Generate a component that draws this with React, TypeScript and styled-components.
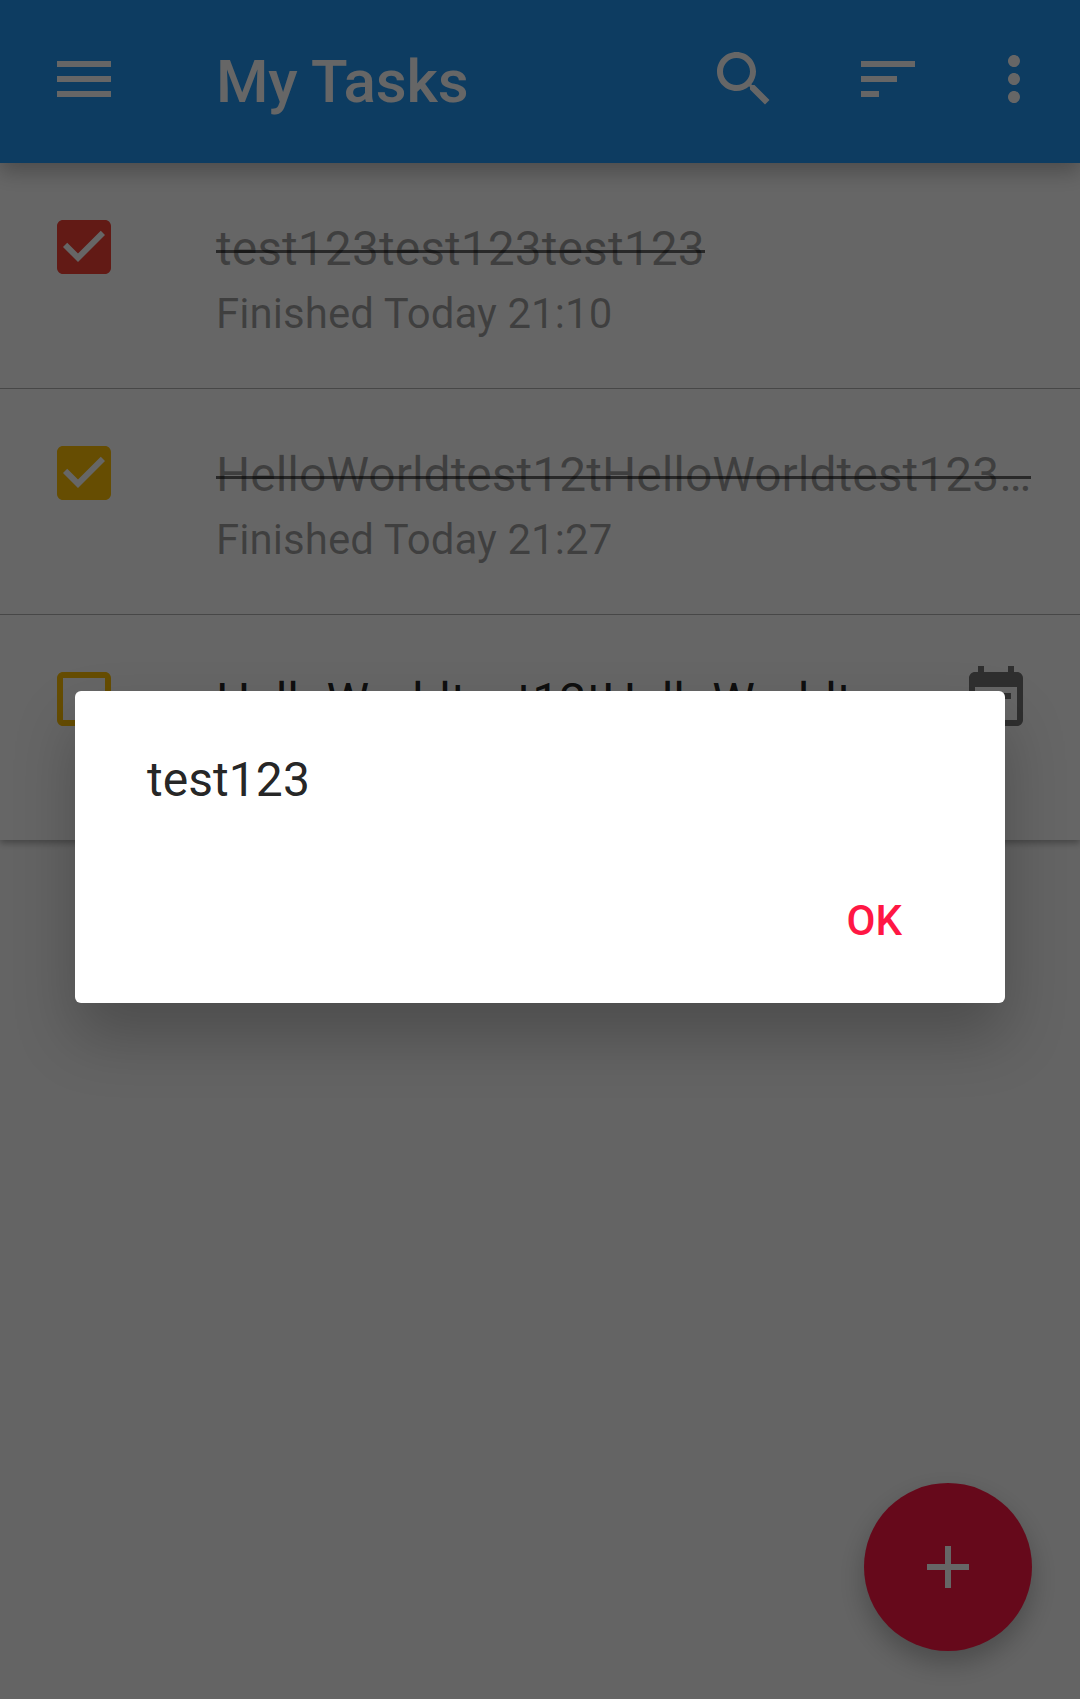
import React from 'react';
import styled, { createGlobalStyle } from 'styled-components';

const GlobalStyle = createGlobalStyle`
  * { box-sizing: border-box; }
  html, body { margin: 0; padding: 0; }
  body { font-family: Roboto, "Noto Sans", sans-serif; background: #fafafa; overflow: hidden; }
`;

const Screen = styled.div`
  position: relative;
  width: 1080px;
  height: 1699px;
  overflow: hidden;
  background: #fafafa;
`;

const Toolbar = styled.header`
  position: relative;
  z-index: 1;
  display: flex;
  align-items: center;
  height: 163px;
  padding: 0 30px 5px 48px;
  background: #2196f3;
  color: #fff;
  box-shadow: 0 9px 20px rgba(0, 0, 0, 0.26);
`;

const ToolbarTitle = styled.h1`
  flex: 1;
  margin: 5px 0 0 96px;
  font-size: 60px;
  line-height: 70px;
  font-weight: 500;
  letter-spacing: -0.12px;
`;

const Actions = styled.div`
  display: flex;
  gap: 72px;
`;

const OverflowSlot = styled.span`
  display: flex;
  margin-left: -18px;
`;

const Icon = styled.svg`
  display: block;
  flex: none;
  width: 72px;
  height: 72px;
  fill: currentColor;
`;

const TaskList = styled.ul`
  margin: 0;
  padding: 0;
  list-style: none;
  background: #fff;
  box-shadow: 0 3px 7px rgba(0, 0, 0, 0.32);
`;

const TaskRow = styled.li`
  display: flex;
  align-items: flex-start;
  height: 226px;
  padding: 48px 48px 0;
  border-bottom: 1px solid rgba(0, 0, 0, 0.3);

  &:last-child {
    height: 225px;
    border-bottom: 0;
  }
`;

const CheckBox = styled(Icon)<{ $tint: string }>`
  color: ${(p) => p.$tint};
`;

const TaskBody = styled.div`
  flex: 1;
  min-width: 0;
  padding-top: 10px;
  margin-left: 96px;
`;

const TaskTitle = styled.span<{ $done: boolean; $tracking?: number }>`
  position: relative;
  display: inline-block;
  vertical-align: top;
  font-size: 48px;
  line-height: 56px;
  letter-spacing: ${(p) => p.$tracking ?? 0}px;
  white-space: nowrap;
  color: ${(p) => (p.$done ? 'rgba(0, 0, 0, 0.38)' : 'rgba(0, 0, 0, 0.87)')};

  &::after {
    content: '';
    display: ${(p) => (p.$done ? 'block' : 'none')};
    position: absolute;
    left: 0;
    right: 0;
    top: 29px;
    height: 3px;
    background: rgba(0, 0, 0, 0.6);
  }
`;

const TaskStatus = styled.div`
  margin-top: 12px;
  font-size: 42px;
  line-height: 50px;
  letter-spacing: 0.05px;
  color: rgba(0, 0, 0, 0.38);
`;

const DueIcon = styled(Icon)`
  color: rgba(0, 0, 0, 0.54);
`;

const Fab = styled.button`
  position: absolute;
  right: 48px;
  bottom: 48px;
  display: flex;
  align-items: center;
  justify-content: center;
  width: 168px;
  height: 168px;
  padding: 0;
  border: 0;
  border-radius: 50%;
  background: #ff1744;
  color: #fff;
  box-shadow: 0 12px 27px rgba(0, 0, 0, 0.25);
`;

const Scrim = styled.div`
  position: absolute;
  inset: 0;
  z-index: 2;
  display: flex;
  justify-content: center;
  align-items: flex-start;
  padding-top: 691px;
  background: rgba(0, 0, 0, 0.6);
`;

const Dialog = styled.div`
  display: flex;
  flex-direction: column;
  justify-content: space-between;
  width: 930px;
  height: 312px;
  padding: 61px 72px 57px;
  border-radius: 6px;
  background: #fff;
  box-shadow: 0 33px 62px rgba(0, 0, 0, 0.24);
`;

const Message = styled.p`
  margin: 0;
  font-size: 48px;
  line-height: 56px;
  letter-spacing: 0.05px;
  color: rgba(0, 0, 0, 0.87);
`;

const DialogButton = styled.button`
  align-self: flex-end;
  margin-right: 31px;
  padding: 0;
  border: 0;
  background: none;
  font: 500 42px/50px Roboto, "Noto Sans", sans-serif;
  color: #ff1744;
`;

type Task = {
  title: string;
  status?: string;
  color: string;
  done: boolean;
  due?: boolean;
  tracking?: number;
};

const tasks: Task[] = [
  { title: 'test123test123test123', status: 'Finished Today 21:10', color: '#f44336', done: true, tracking: 0.05 },
  { title: 'HelloWorldtest12tHelloWorldtest123…', status: 'Finished Today 21:27', color: '#ffc107', done: true },
  { title: 'HelloWorldtest12tHelloWorldt…', color: '#ffc107', done: false, due: true },
];

const checkedPath =
  'M19 3H5c-1.11 0-2 .9-2 2v14c0 1.1.89 2 2 2h14c1.11 0 2-.9 2-2V5c0-1.1-.89-2-2-2zm-9 14l-5-5 1.41-1.41L10 14.17l7.59-7.59L19 8l-9 9z';
const uncheckedPath =
  'M19 5v14H5V5h14m0-2H5c-1.1 0-2 .9-2 2v14c0 1.1.9 2 2 2h14c1.1 0 2-.9 2-2V5c0-1.1-.9-2-2-2z';

const Glyph = ({ d }: { d: string }) => (
  <Icon viewBox="0 0 24 24">
    <path d={d} />
  </Icon>
);

export default function App() {
  return (
    <Screen>
      <GlobalStyle />
      <Toolbar>
        <Glyph d="M3 18h18v-2H3v2zm0-5h18v-2H3v2zm0-7v2h18V6H3z" />
        <ToolbarTitle>My Tasks</ToolbarTitle>
        <Actions>
          <Glyph d="M15.5 14h-.79l-.28-.27C15.41 12.59 16 11.11 16 9.5 16 5.91 13.09 3 9.5 3S3 5.91 3 9.5 5.91 16 9.5 16c1.61 0 3.09-.59 4.23-1.57l.27.28v.79l5 4.99L20.49 19l-4.99-5zm-6 0C7.01 14 5 11.99 5 9.5S7.01 5 9.5 5 14 7.01 14 9.5 11.99 14 9.5 14z" />
          <Glyph d="M3 18h6v-2H3v2zM3 6v2h18V6H3zm0 7h12v-2H3v2z" />
          <OverflowSlot>
            <Glyph d="M12 8c1.1 0 2-.9 2-2s-.9-2-2-2-2 .9-2 2 .9 2 2 2zm0 2c-1.1 0-2 .9-2 2s.9 2 2 2 2-.9 2-2-.9-2-2-2zm0 6c-1.1 0-2 .9-2 2s.9 2 2 2 2-.9 2-2-.9-2-2-2z" />
          </OverflowSlot>
        </Actions>
      </Toolbar>
      <TaskList>
        {tasks.map((task, i) => (
          <TaskRow key={i}>
            <CheckBox viewBox="0 0 24 24" $tint={task.color}>
              <path d={task.done ? checkedPath : uncheckedPath} />
            </CheckBox>
            <TaskBody>
              <TaskTitle $done={task.done} $tracking={task.tracking}>
                {task.title}
              </TaskTitle>
              {task.status && <TaskStatus>{task.status}</TaskStatus>}
            </TaskBody>
            {task.due && (
              <DueIcon viewBox="0 0 24 24">
                <path d="M17 10H7v2h10v-2zm2-7h-1V1h-2v2H8V1H6v2H5c-1.11 0-2 .9-2 2v14c0 1.1.89 2 2 2h14c1.1 0 2-.9 2-2V5c0-1.1-.9-2-2-2zm0 16H5V8h14v11zm-5-5H7v2h7v-2z" />
              </DueIcon>
            )}
          </TaskRow>
        ))}
      </TaskList>
      <Fab aria-label="Add task">
        <Glyph d="M19 13h-6v6h-2v-6H5v-2h6V5h2v6h6v2z" />
      </Fab>
      <Scrim>
        <Dialog role="dialog">
          <Message>test123</Message>
          <DialogButton>OK</DialogButton>
        </Dialog>
      </Scrim>
    </Screen>
  );
}
